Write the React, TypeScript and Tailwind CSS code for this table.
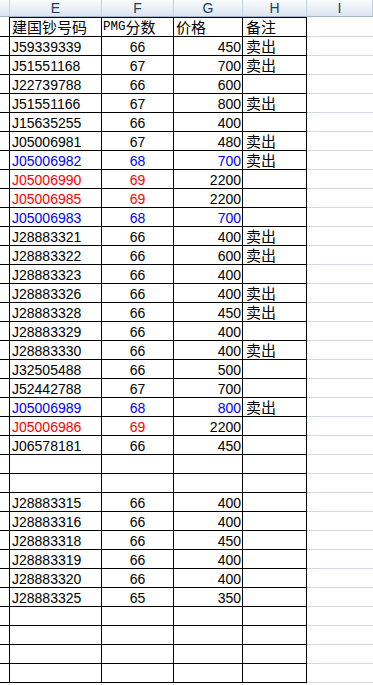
import React from 'react';

type Row = {
  code: string;
  grade: string;
  price: string;
  note?: string;
  color?: 'blue' | 'red';
};

const rows: (Row | null)[] = [
  { code: 'J59339339', grade: '66', price: '450', note: '卖出' },
  { code: 'J51551168', grade: '67', price: '700', note: '卖出' },
  { code: 'J22739788', grade: '66', price: '600' },
  { code: 'J51551166', grade: '67', price: '800', note: '卖出' },
  { code: 'J15635255', grade: '66', price: '400' },
  { code: 'J05006981', grade: '67', price: '480', note: '卖出' },
  { code: 'J05006982', grade: '68', price: '700', note: '卖出', color: 'blue' },
  { code: 'J05006990', grade: '69', price: '2200', color: 'red' },
  { code: 'J05006985', grade: '69', price: '2200', color: 'red' },
  { code: 'J05006983', grade: '68', price: '700', color: 'blue' },
  { code: 'J28883321', grade: '66', price: '400', note: '卖出' },
  { code: 'J28883322', grade: '66', price: '600', note: '卖出' },
  { code: 'J28883323', grade: '66', price: '400' },
  { code: 'J28883326', grade: '66', price: '400', note: '卖出' },
  { code: 'J28883328', grade: '66', price: '450', note: '卖出' },
  { code: 'J28883329', grade: '66', price: '400' },
  { code: 'J28883330', grade: '66', price: '400', note: '卖出' },
  { code: 'J32505488', grade: '66', price: '500' },
  { code: 'J52442788', grade: '67', price: '700' },
  { code: 'J05006989', grade: '68', price: '800', note: '卖出', color: 'blue' },
  { code: 'J05006986', grade: '69', price: '2200', color: 'red' },
  { code: 'J06578181', grade: '66', price: '450' },
  null,
  null,
  { code: 'J28883315', grade: '66', price: '400' },
  { code: 'J28883316', grade: '66', price: '400' },
  { code: 'J28883318', grade: '66', price: '450' },
  { code: 'J28883319', grade: '66', price: '400' },
  { code: 'J28883320', grade: '66', price: '400' },
  { code: 'J28883325', grade: '65', price: '350' },
  null,
  null,
  null,
  null,
];

const cn = "font-['Noto_Sans_CJK_SC',sans-serif] text-[15px]";

function HeaderBar() {
  const cols = [
    { label: 'E', w: 'w-[92px]' },
    { label: 'F', w: 'w-[72px]' },
    { label: 'G', w: 'w-[69px]' },
    { label: 'H', w: 'w-[64px]' },
  ];
  return (
    <div className="flex h-[17px] border-b border-[#9eb6ce] bg-linear-to-b from-[#f9fbfd] to-[#dce5ef] text-[#1f3b5e] text-[14px] leading-[16px]">
      <div className="w-[9px]" />
      {cols.map((c) => (
        <div key={c.label} className={`${c.w} border-l border-[#c3d0df] flex items-center justify-center`}>
          {c.label}
        </div>
      ))}
      <div className="w-[67px] border-x border-[#c3d0df] flex items-center justify-center">I</div>
    </div>
  );
}

function DataRow({ row }: { row: Row | null }) {
  const color = row?.color === 'blue' ? 'text-[#0000ff]' : row?.color === 'red' ? 'text-[#ff0000]' : 'text-black';
  // red rows keep the price in black
  const priceColor = row?.color === 'blue' ? 'text-[#0000ff]' : 'text-black';
  return (
    <div className="flex h-[19px] leading-[18px]">
      <div className="w-[9px] border-b border-black" />
      <div className={`w-[92px] border-l border-b border-black pl-[2px] pt-[1px] ${color}`}>{row?.code}</div>
      <div className={`w-[72px] border-l border-b border-black text-center pt-[1px] ${color}`}>{row?.grade}</div>
      <div className={`w-[69px] border-l border-b border-black text-right pr-[1px] pt-[1px] ${priceColor}`}>{row?.price}</div>
      <div className="w-[65px] border-x border-b border-black pl-[3px]">
        {row?.note && <span className={cn}>{row.note}</span>}
      </div>
      <div className="w-[66px] border-b border-[#d0d7e5]" />
    </div>
  );
}

export default function App() {
  return (
    <div className="w-[373px] h-[685px] overflow-hidden bg-white font-['Liberation_Sans',sans-serif] text-[14px]">
      <HeaderBar />

      {/* title row */}
      <div className="flex h-[20px] leading-[18px]">
        <div className="w-[9px] border-b border-black" />
        <div className="w-[92px] border-l border-t border-b border-black pl-[2px]">
          <span className={cn}>建国钞号码</span>
        </div>
        <div className="w-[72px] border-l border-t border-b border-black pl-[1px] flex items-center">
          <span className="font-['Liberation_Mono',monospace] text-[12.5px]">PMG</span>
          <span className={cn}>分数</span>
        </div>
        <div className="w-[69px] border-l border-t border-b border-black pl-[2px]">
          <span className={cn}>价格</span>
        </div>
        <div className="w-[65px] border-x border-t border-b border-black pl-[3px]">
          <span className={cn}>备注</span>
        </div>
        <div className="w-[66px] border-b border-[#d0d7e5]" />
      </div>

      {rows.map((r, i) => (
        <DataRow key={i} row={r} />
      ))}

      {/* partial row at the bottom edge */}
      <div className="flex h-[19px]">
        <div className="w-[9px]" />
        <div className="w-[92px] border-l border-[#d0d7e5]" />
        <div className="w-[72px] border-l border-[#d0d7e5]" />
        <div className="w-[69px] border-l border-[#d0d7e5]" />
        <div className="w-[65px] border-x border-[#d0d7e5]" />
      </div>
    </div>
  );
}
